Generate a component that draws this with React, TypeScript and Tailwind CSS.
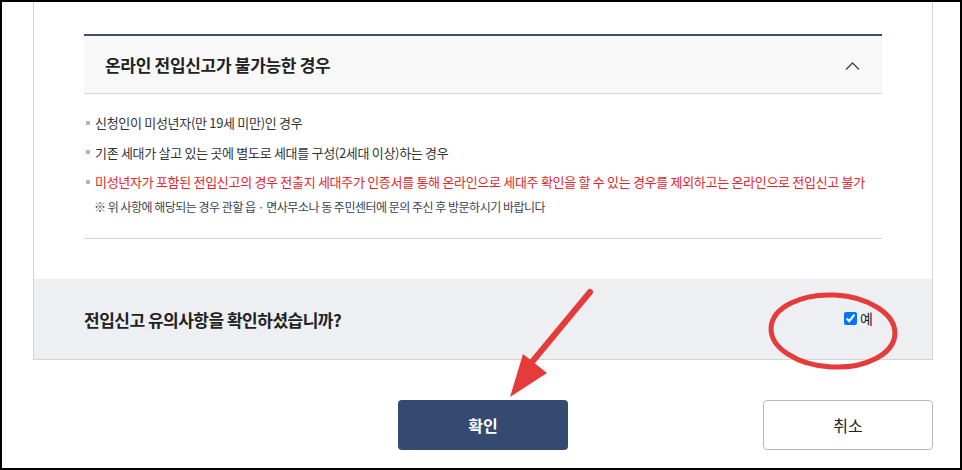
import { useState } from 'react';

const items = [
    { text: '신청인이 미성년자(만 19세 미만)인 경우', red: false },
    { text: '기존 세대가 살고 있는 곳에 별도로 세대를 구성(2세대 이상)하는 경우', red: false },
    {
        text: '미성년자가 포함된 전입신고의 경우 전출지 세대주가 인증서를 통해 온라인으로 세대주 확인을 할 수 있는 경우를 제외하고는 온라인으로 전입신고 불가',
        red: true,
    },
];

export default function App() {
    const [open, setOpen] = useState(true);
    const [checked, setChecked] = useState(true);

    return (
        <div
            className="relative w-[962px] h-[470px] overflow-hidden bg-white border-2 border-black"
            style={{ fontFamily: '"Noto Sans CJK KR", "Noto Sans", sans-serif' }}
        >
            <div className="ml-[31px] mr-[27px] border-x border-b border-[#d4d4d4] pt-[32px]">
                {/* 아코디언 */}
                <div className="mx-[50px] border-t-2 border-[#3d4f6e]">
                    <button
                        type="button"
                        onClick={() => setOpen(!open)}
                        className="w-full h-[58px] flex items-center justify-between bg-[#f8f8f8] border-b border-[#d6d6d6] pl-[21px] pr-[22px]"
                    >
                        <span className="text-[17px] font-bold text-[#222] tracking-[-0.3px]">
                            온라인 전입신고가 불가능한 경우
                        </span>
                        <svg className="w-[15px] h-[10px] mt-[3px] text-[#444]" viewBox="0 0 15 10" fill="none" stroke="currentColor">
                            <path d="M1 8.5L7.5 2L14 8.5" strokeWidth={1.3} />
                        </svg>
                    </button>
                    {open && (
                        <div className="pt-[14px] pb-[21px] border-b border-[#d6d6d6]">
                            <ul>
                                {items.map((it) => (
                                    <li key={it.text} className="flex items-center leading-[29.5px] text-[13px] tracking-[-0.3px]">
                                        <span className="w-[4px] h-[4px] bg-[#b5b5b5] ml-[2px] mr-[5px] shrink-0" />
                                        <span className={it.red ? 'text-[#e8242b]' : 'text-[#333]'}>{it.text}</span>
                                    </li>
                                ))}
                            </ul>
                            <p className="pl-[10px] text-[12px] leading-[20px] tracking-[-0.5px] text-[#3a4354]">
                                ※ 위 사항에 해당되는 경우 관할 읍 · 면사무소나 동 주민센터에 문의 주신 후 방문하시기 바랍니다
                            </p>
                        </div>
                    )}
                </div>

                {/* 확인 영역 */}
                <div className="mt-[40px] h-[80px] bg-[#eeeff2] flex items-center justify-between pl-[50px] pr-[59px]">
                    <span className="text-[17px] font-bold text-[#222] tracking-[-0.5px] pt-[2px]">
                        전입신고 유의사항을 확인하셨습니까?
                    </span>
                    <label className="flex items-center gap-[3px] text-[14px] text-[#222] pb-[1px]">
                        <input
                            type="checkbox"
                            checked={checked}
                            onChange={(e) => setChecked(e.target.checked)}
                            className="w-[13px] h-[13px] m-0 accent-[#0075ff]"
                        />
                        예
                    </label>
                </div>
            </div>

            {/* 버튼 */}
            <div className="ml-[31px] mr-[27px] mt-[40px] grid grid-cols-[1fr_auto_1fr]">
                <div />
                <button
                    type="button"
                    className="w-[170px] h-[50px] rounded-[4px] bg-[#344a71] text-white text-[16px] font-bold"
                >
                    확인
                </button>
                <div className="flex justify-end">
                    <button
                        type="button"
                        className="w-[170px] h-[50px] rounded-[4px] bg-white border border-[#b9b9b9] text-[#222] text-[16px]"
                    >
                        취소
                    </button>
                </div>
            </div>

            {/* 빨간 표시 */}
            <svg className="absolute left-0 top-0 pointer-events-none" width="962" height="470" viewBox="-2 -2 962 470">
                <ellipse
                    cx="829"
                    cy="327"
                    rx="62"
                    ry="36"
                    fill="none"
                    stroke="#e53b3b"
                    strokeWidth={5}
                    transform="rotate(3 829 327)"
                />
                <line x1="586" y1="288" x2="528" y2="358" stroke="#e53b3b" strokeWidth={6} strokeLinecap="round" />
                <polygon points="506,393 519,350 543,369" fill="#e53b3b" />
            </svg>
        </div>
    );
}
